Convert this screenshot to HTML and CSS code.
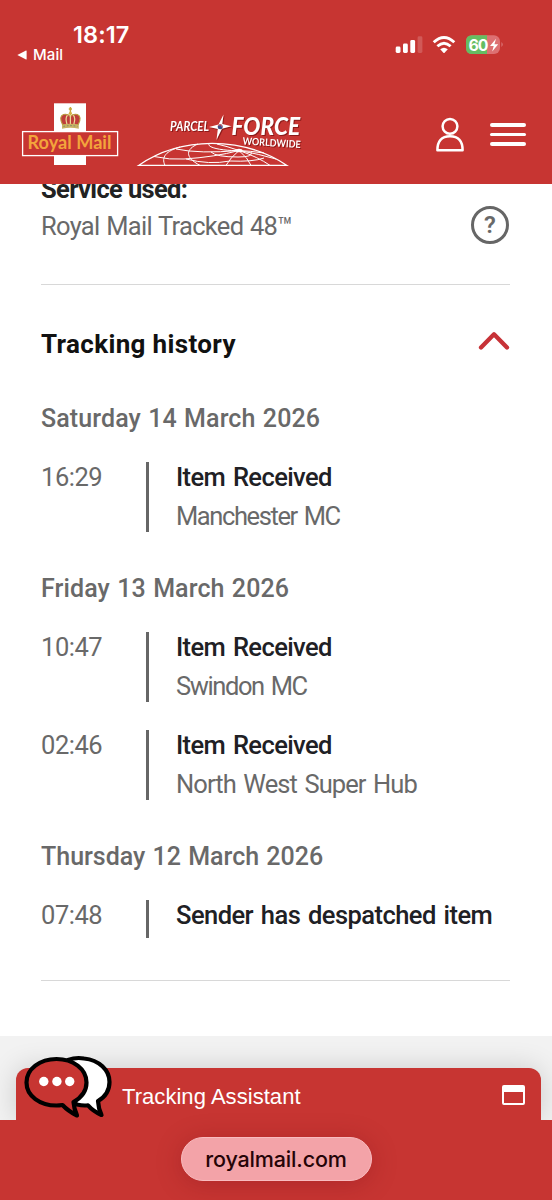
FILE: index.html
```html
<!DOCTYPE html>
<html lang="en">
<head>
<meta charset="utf-8">
<title>Royal Mail tracking</title>
<link rel="stylesheet" href="styles.css">
</head>
<body>
<div class="phone">
  <header class="header">
    <div class="status">
      <div class="status-left">
        <div class="clock">18:17</div>
        <div class="back"><svg width="10" height="10" viewBox="0 0 10 10"><path d="M0.3 5 L9 .5 Q9.6 .3 9.6 1V9Q9.6 9.7 9 9.5Z" fill="#fff"/></svg><span>Mail</span></div>
      </div>
      <svg class="status-icons" width="110" height="24" viewBox="394 33 110 24">
        <g fill="#fff">
          <rect x="395.7" y="46.5" width="4.8" height="6.5" rx="1.4"/>
          <rect x="403" y="43.5" width="4.8" height="9.5" rx="1.4"/>
          <rect x="410.3" y="40" width="4.8" height="13" rx="1.4"/>
          <rect x="417.6" y="36.3" width="4.8" height="16.7" rx="1.4" opacity=".18"/>
          <path d="M440.2 49.3Q444 46.3 447.8 49.3L444.6 52.7Q444 53.2 443.4 52.7Z"/>
        </g>
        <g fill="none" stroke="#fff" stroke-width="2.9">
          <path d="M433.7 42.2Q444 32.8 454.3 42.2"/>
          <path d="M437.4 46.3Q444 40.2 450.6 46.3"/>
        </g>
        <rect x="466" y="35.3" width="34" height="18.8" rx="6" fill="#dd7072"/>
        <path d="M472 35.3H487V54.1H472Q466 54.1 466 48.1V41.3Q466 35.3 472 35.3Z" fill="#65bd62"/>
        <path d="M501.5 42q2.4 2.5 0 5z" fill="#dd7f80"/>
        <text class="battery" x="468.6" y="50.6" textLength="20">60</text>
        <path d="M496 38.8L490 45.9H493.7L492.2 51.4L498.2 44.2H494.4Z" fill="#fff"/>
      </svg>
    </div>
    <div class="brand">
      <svg class="rm-logo" width="98" height="64" viewBox="21 102 98 64">
        <rect x="54" y="103.3" width="32" height="61.7" fill="#fff"/>
        <rect x="22.6" y="131.6" width="95" height="24" fill="#c73532" stroke="#fff" stroke-width="1.3"/>
        <path d="M70.4 107V112M68.8 109H72" stroke="#c7a63b" stroke-width="1.5"/>
        <path d="M62.5 124.5Q58.5 116.5 63.5 114.5Q67.5 113.5 70.4 116.5Q73.3 113.5 77.3 114.5Q82.3 116.5 78.3 124.5Z" fill="#bf3e3b" stroke="#b99b3d" stroke-width="1.1"/>
        <path d="M67 124.5Q65 117.5 67.5 115.2M73.8 124.5Q75.8 117.5 73.3 115.2M70.4 112V124" fill="none" stroke="#ead997" stroke-width="1.2"/>
        <circle cx="70.4" cy="113.3" r="1.6" fill="#d4b345"/>
        <path d="M62 125Q70.4 122.5 78.8 125V128.7Q70.4 127 62 128.7Z" fill="#c8b264"/>
        <path d="M63.5 126.4Q70.4 124.8 77.4 126.4" fill="none" stroke="#7c896b" stroke-width="1" stroke-dasharray="1.6 1.8"/>
        <text class="rm-word" x="27.5" y="148.7" textLength="84" lengthAdjust="spacingAndGlyphs">Royal Mail</text>
      </svg>
      <svg class="pf-logo" width="170" height="54" viewBox="137 113 170 54">
        <g class="shade">
          <text class="pf-parcel" x="170" y="131.2" textLength="39" lengthAdjust="spacingAndGlyphs">PARCEL</text>
          <text class="pf-force" x="231.5" y="135" textLength="68.500" lengthAdjust="spacingAndGlyphs">FORCE</text>
          <path d="M223.500 114.500L222.300 124L231.500 126.300L222 128.800L216.500 140L217.800 129L209 127L218.500 124.500Z" fill="#fff"/>
          <text class="pf-world" transform="rotate(3.5 242.500 144.500)" x="242.500" y="144.500" textLength="58" lengthAdjust="spacingAndGlyphs">WORLDWIDE</text>
        </g>
        <circle cx="220.200" cy="126.700" r="2.500" fill="#3e4c86"/><path d="M218 125.5l3-1 .8 2.2" fill="none" stroke="#d85b60" stroke-width="1"/>
        <g fill="none" stroke="#fff" stroke-width="1">
          <path stroke-width="1.2" d="M138.5 165.4Q170 143.500 212 143.300Q254 143.500 287 165.4Z"/>
          <path d="M165 165.4C161 157 166 151 180 147M200 165.4C184 157 186 149 198 144M226 165.4Q230 158 239 150.500M251 165.4Q248 158 239 150.500M270 165.4Q258 157 239 150.500M239 150.500C225 151 207 148 209 144M239 150.500Q226 146 217 144M239 150.500Q250 151 264 153M239 150.500Q259 154 276 159M154 156.500Q170 160 184 159Q215 157 239 150.500M176 149Q200 154 239 150.500M186 159Q209 165 230 161Q253 162 264 158M211 152Q216 157 238 157Q254 157 251 152"/>
        </g>
        <ellipse cx="239" cy="150.500" rx="3.500" ry="1.800" fill="#fff"/>
      </svg>
      <svg class="user" width="28" height="35" viewBox="436 117 28 35" fill="none" stroke="#fff" stroke-width="2.5" stroke-linejoin="round">
        <circle cx="450" cy="126.3" r="7.4"/><path d="M437.4 150.3Q437.3 136.3 450 136.3Q462.7 136.3 462.6 150.3Z"/>
      </svg>
      <div class="burger"><i></i><i></i><i></i></div>
    </div>
  </header>

  <main class="content">
    <section class="service">
      <div>
        <div class="service-label">Service used:</div>
        <div class="service-name">Royal Mail Tracked 48™</div>
      </div>
      <div class="help">?</div>
    </section>
    <section class="history">
      <div class="history-head">
        <h2>Tracking history</h2>
        <svg width="32" height="20" viewBox="0 0 32 20"><path d="M3 16.5L16 3.3L29 16.5" fill="none" stroke="#c73237" stroke-width="4.3" stroke-linecap="round" stroke-linejoin="round"/></svg>
      </div>
      <h3>Saturday 14 March 2026</h3>
      <div class="event"><time>16:29</time><div class="detail"><b>Item Received</b><span class="tight">Manchester MC</span></div></div>
      <h3>Friday 13 March 2026</h3>
      <div class="event"><time>10:47</time><div class="detail"><b>Item Received</b><span class="tight">Swindon MC</span></div></div>
      <div class="event follow"><time>02:46</time><div class="detail"><b>Item Received</b><span>North West Super Hub</span></div></div>
      <h3 class="narrow">Thursday 12 March 2026</h3>
      <div class="event short"><time>07:48</time><div class="detail"><b class="long">Sender has despatched item</b></div></div>
    </section>
  </main>

  <div class="assist-zone">
    <div class="assist">
      <svg class="bubbles" width="90" height="64" viewBox="23 1053 90 64" stroke="#000" stroke-width="4.2" stroke-linejoin="round">
        <path d="M68 1059Q76 1056 84 1057.5C99 1059 109.5 1069 109.5 1081C109.5 1090 105 1096 98 1100Q98.5 1108 101.5 1114Q93 1110 88 1104.3Q83 1105 77 1103.5L66 1098Z" fill="#fff"/>
        <path d="M56.5 1058C73 1058 86.5 1068 86.5 1081.5C86.5 1090 81.5 1096.5 73.5 1101Q74 1108 77 1114.5Q68 1110 62.5 1104Q59 1104.5 56.5 1104.5C40 1104.5 26.5 1095 26.5 1081.5C26.5 1068 40 1058 56.5 1058Z" fill="#c73532"/>
        <g fill="#fff" stroke="none"><circle cx="43.8" cy="1080.500" r="4.7"/><circle cx="56.9" cy="1080.500" r="4.7"/><circle cx="69.7" cy="1080.500" r="4.7"/></g>
      </svg>
      <span class="assist-title">Tracking Assistant</span>
      <div class="window-icon"></div>
    </div>
  </div>
  <footer class="browser-bar"><div class="url">royalmail.com</div></footer>
</div>
</body>
</html>
```
FILE: styles.css
```css
* { box-sizing: border-box; }
body { margin: 0; background: #fff; }
.phone { width: 552px; height: 1200px; display: flex; flex-direction: column; overflow: hidden; font-family: Roboto, "Liberation Sans", sans-serif; color: #696969; background: #fff; }
svg { display: block; flex: none; }

.header { height: 184px; flex: none; background: #c73532; color: #fff; position: relative; }
.status { height: 102px; padding: 21px 48px 0 17px; display: flex; justify-content: space-between; }
.status-left { font-family: Inter, sans-serif; }
.clock { padding-left: 56px; font-size: 23.5px; font-weight: 600; line-height: 27px; letter-spacing: .1px; }
.back { display: flex; align-items: center; gap: 6px; font-size: 15px; line-height: 14px; letter-spacing: .1px; font-weight: 500; }
.status-icons { margin-top: 12px; }
.battery { font: 700 16px Inter, sans-serif; fill: #fff; }
.brand { display: flex; height: 64px; padding-left: 21px; }
.rm-word { font: 700 18.5px Lato, sans-serif; fill: #f3a43c; }
.pf-logo { margin: 11px 0 0 18px; overflow: visible; }
.shade { filter: drop-shadow(1px 1px .5px rgba(80, 0, 0, .5)); }
.pf-parcel { font: italic 700 12.5px Lato, sans-serif; fill: #fff; }
.pf-force { font: italic 900 24px Lato, sans-serif; fill: #fff; }
.pf-world { font: 700 10px Lato, sans-serif; fill: #fff; }
.user { margin: 15px 0 0 129px; }
.burger { width: 36px; height: 23px; margin: 21px 0 0 26px; display: flex; flex-direction: column; justify-content: space-between; }
.burger i { height: 3.6px; border-radius: 2px; background: #fff; }

.content { height: 852px; flex: none; padding: 0 42px 0 41px; font-size: 25.5px; }
.service { height: 101px; border-bottom: 1px solid #d8d8d8; display: flex; justify-content: space-between; }
.service-label { height: 23px; line-height: 38px; margin-top: -14px; padding-bottom: 38px; font-weight: 700; color: #222; letter-spacing: -.65px; }
.service-name { line-height: 38px; margin-top: -1px; white-space: nowrap; letter-spacing: -.7px; word-spacing: 1px; }
.help { width: 38px; height: 38px; margin: 22px 1px 0 0; border: 3.5px solid #666; border-radius: 50%; text-align: center; font-size: 24px; line-height: 32px; font-weight: 600; }
.history { height: 696px; border-bottom: 1px solid #d8d8d8; padding-top: 40px; }
.history-head { display: flex; justify-content: space-between; align-items: center; height: 38px; }
.history-head svg { margin-bottom: 7px; }
h2 { margin: 0; font-size: 26px; line-height: 38px; color: #111; font-weight: 700; letter-spacing: .35px; }
h3 { margin: 37px 0 0; height: 38px; font-size: 25px; line-height: 38px; font-weight: 500; letter-spacing: .1px; word-spacing: 1px; white-space: nowrap; }
h3.narrow { letter-spacing: 0; }
.event { display: grid; grid-template-columns: 105px 1fr; height: 70px; margin-top: 24px; }
.event + h3 { margin-top: 38px; }
.event.follow { margin-top: 28px; }
.event.short { height: 38px; }
.event time { margin-top: -4px; line-height: 38px; letter-spacing: -.45px; }
.detail { height: 100%; min-height: 0; max-height: 70px; border-left: 3px solid #666; padding-left: 27px; white-space: nowrap; }
.detail b, .detail span { display: block; height: 38.5px; line-height: 38.5px; }
.detail b { margin-top: -4px; font-weight: 500; color: #202024; letter-spacing: -.6px; word-spacing: 2px; }
.detail b.long { letter-spacing: -.55px; }
.detail span { letter-spacing: -.9px; word-spacing: 2px; }
.detail span.tight { letter-spacing: -1.4px; }

.assist-zone { height: 84px; flex: none; padding: 32px 11px 0 16px; background: #f2f2f2; overflow: hidden; }
.assist { height: 52px; background: #c73532; border-radius: 12px 12px 0 0; box-shadow: 0 0 28px rgba(0, 0, 0, .16); display: flex; align-items: center; padding: 0 16px 0 7px; color: #fff; }
.bubbles { margin: -17px 9px 0 0; }
.assist-title { font: 22px/28px "Liberation Sans", sans-serif; letter-spacing: .05px; margin-top: 5px; }
.window-icon { width: 23px; height: 20px; margin: 2px 0 0 auto; border: 2px solid #fff; border-top-width: 7px; border-radius: 2px; }
.browser-bar { flex: none; height: 80px; padding-top: 17px; background: #c73532; display: flex; justify-content: center; position: relative; }
.url { width: 191px; height: 44px; border-radius: 22px; border: 1px solid #f9bcc0; background: #f3a3a8; box-shadow: 0 3px 26px rgba(100, 0, 20, .25); color: #250407; text-align: center; font: 500 21.5px/42px Inter, sans-serif; letter-spacing: -.15px; white-space: nowrap; }
```
